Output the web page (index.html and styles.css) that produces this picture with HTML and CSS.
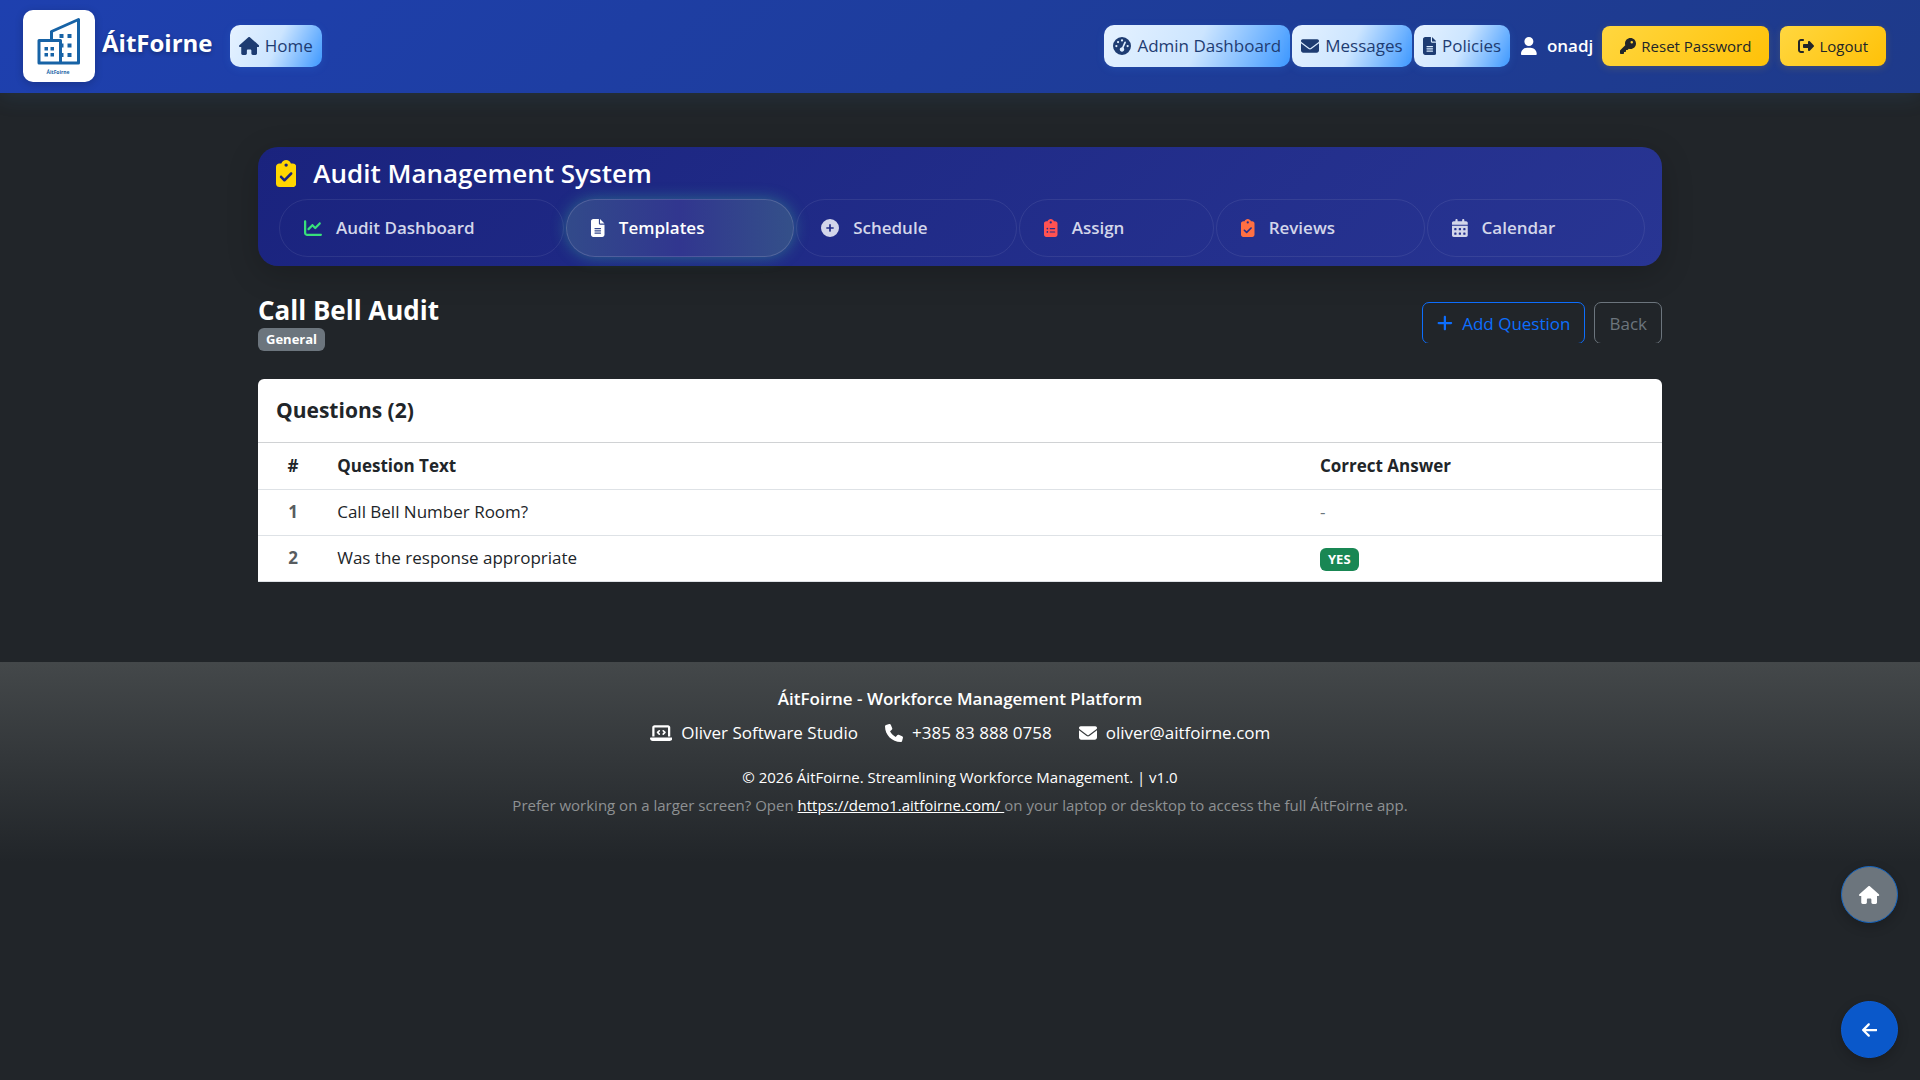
FILE: index.html
```html
<!DOCTYPE html>
<html lang="en">
<head>
  <meta charset="UTF-8">
  <meta name="viewport" content="width=device-width, initial-scale=1.0">
  <title>Call Bell Audit</title>
  <link rel="stylesheet" href="styles.css">
</head>
<body>
  <!-- Shared icon shapes -->
  <svg class="icon-defs" aria-hidden="true">
    <defs>
      <path id="i-home" d="M575.8 255.5c0 18-15 32.1-32 32.1h-32l.7 160.2c0 2.7-.2 5.4-.5 8.1V472c0 22.1-17.9 40-40 40H456c-1.1 0-2.2 0-3.3-.1c-1.4 .1-2.8 .1-4.2 .1H416 392c-22.1 0-40-17.9-40-40V448 384c0-17.7-14.3-32-32-32H256c-17.7 0-32 14.3-32 32v64 24c0 22.1-17.9 40-40 40H160 128.1c-1.5 0-3-.1-4.5-.2c-1.2 .1-2.4 .2-3.6 .2H104c-22.1 0-40-17.9-40-40V360c0-.9 0-1.9 .1-2.8V287.6H32c-18 0-32-14-32-32.1c0-9 3-17 10-24L266.4 8c7-7 15-8 22-8s15 2 21 7L564.8 231.5c8 7 12 15 11 24z"/>
      <path id="i-gauge" d="M0 256a256 256 0 1 1 512 0A256 256 0 1 1 0 256zM288 96a32 32 0 1 0 -64 0 32 32 0 1 0 64 0zM256 416c35.3 0 64-28.7 64-64c0-17.4-6.9-33.1-18.1-44.6L366 161.7c5.3-12.1-.2-26.3-12.3-31.6s-26.3 .2-31.6 12.3L257.9 288c-.6 0-1.3 0-1.9 0c-35.3 0-64 28.7-64 64s28.7 64 64 64zM176 144a32 32 0 1 0 -64 0 32 32 0 1 0 64 0zM96 288a32 32 0 1 0 0-64 32 32 0 1 0 0 64zm352-32a32 32 0 1 0 -64 0 32 32 0 1 0 64 0z"/>
      <path id="i-mail" d="M48 64C21.5 64 0 85.5 0 112c0 15.1 7.1 29.3 19.2 38.4L236.8 313.6c11.4 8.5 27 8.5 38.4 0L492.8 150.4c12.1-9.1 19.2-23.3 19.2-38.4c0-26.5-21.5-48-48-48H48zM0 176V384c0 35.3 28.7 64 64 64H448c35.3 0 64-28.7 64-64V176L294.4 339.2c-22.8 17.1-54 17.1-76.8 0L0 176z"/>
      <path id="i-file" d="M64 0C28.7 0 0 28.7 0 64V448c0 35.3 28.7 64 64 64H320c35.3 0 64-28.7 64-64V160H256c-17.7 0-32-14.3-32-32V0H64zM256 0V128H384L256 0zM112 256H272c8.8 0 16 7.2 16 16s-7.2 16-16 16H112c-8.8 0-16-7.2-16-16s7.2-16 16-16zm0 64H272c8.8 0 16 7.2 16 16s-7.2 16-16 16H112c-8.8 0-16-7.2-16-16s7.2-16 16-16zm0 64H272c8.8 0 16 7.2 16 16s-7.2 16-16 16H112c-8.8 0-16-7.2-16-16s7.2-16 16-16z"/>
      <path id="i-user" d="M224 256A128 128 0 1 0 224 0a128 128 0 1 0 0 256zm-45.7 48C79.8 304 0 383.8 0 482.3C0 498.7 13.3 512 29.7 512H418.3c16.4 0 29.7-13.3 29.7-29.7C448 383.8 368.2 304 269.7 304H178.3z"/>
      <path id="i-key" d="M336 352c97.2 0 176-78.8 176-176S433.2 0 336 0S160 78.8 160 176c0 18.7 2.9 36.8 8.3 53.7L7 391c-4.5 4.5-7 10.6-7 17v80c0 13.3 10.7 24 24 24h80c13.3 0 24-10.7 24-24V448h40c13.3 0 24-10.7 24-24V384h40c6.4 0 12.5-2.5 17-7l33.3-33.3c16.9 5.4 35 8.3 53.7 8.3zM376 96a40 40 0 1 1 0 80 40 40 0 1 1 0-80z"/>
      <path id="i-logout" d="M377.9 105.9L500.7 228.7c7.2 7.2 11.3 17.1 11.3 27.3s-4.1 20.1-11.3 27.3L377.9 406.1c-6.4 6.4-15 9.9-24 9.9c-18.7 0-33.9-15.2-33.9-33.9l0-62.1-128 0c-17.7 0-32-14.3-32-32l0-64c0-17.7 14.3-32 32-32l128 0 0-62.1c0-18.7 15.2-33.9 33.9-33.9c9 0 17.6 3.6 24 9.9zM160 96L96 96c-17.7 0-32 14.3-32 32l0 256c0 17.7 14.3 32 32 32l64 0c17.7 0 32 14.3 32 32s-14.3 32-32 32l-64 0c-53 0-96-43-96-96L0 128C0 75 43 32 96 32l64 0c17.7 0 32 14.3 32 32s-14.3 32-32 32z"/>
      <path id="i-check" d="M192 0c-41.8 0-77.4 26.7-90.5 64H64C28.7 64 0 92.7 0 128V448c0 35.3 28.7 64 64 64H320c35.3 0 64-28.7 64-64V128c0-35.3-28.7-64-64-64H282.5C269.4 26.7 233.8 0 192 0zm0 64a32 32 0 1 1 0 64 32 32 0 1 1 0-64zM305 273L177 401c-9.4 9.4-24.6 9.4-33.9 0L79 337c-9.4-9.4-9.4-24.6 0-33.9s24.6-9.4 33.9 0l47 47L271 239c9.4-9.4 24.6-9.4 33.9 0s9.4 24.6 0 33.9z"/>
      <path id="i-list" d="M192 0c-41.8 0-77.4 26.7-90.5 64H64C28.7 64 0 92.7 0 128V448c0 35.3 28.7 64 64 64H320c35.3 0 64-28.7 64-64V128c0-35.3-28.7-64-64-64H282.5C269.4 26.7 233.8 0 192 0zm0 64a32 32 0 1 1 0 64 32 32 0 1 1 0-64zM72 272a24 24 0 1 1 48 0 24 24 0 1 1 -48 0zm104-16H304c8.8 0 16 7.2 16 16s-7.2 16-16 16H176c-8.8 0-16-7.2-16-16s7.2-16 16-16zM72 368a24 24 0 1 1 48 0 24 24 0 1 1 -48 0zm88 0c0-8.8 7.2-16 16-16H304c8.8 0 16 7.2 16 16s-7.2 16-16 16H176c-8.8 0-16-7.2-16-16z"/>
      <path id="i-chart" d="M64 64c0-17.7-14.3-32-32-32S0 46.3 0 64V400c0 44.2 35.8 80 80 80H480c17.7 0 32-14.3 32-32s-14.3-32-32-32H80c-8.8 0-16-7.2-16-16V64zm406.6 86.6c12.5-12.5 12.5-32.8 0-45.3s-32.8-12.5-45.3 0L320 210.7l-57.4-57.4c-12.5-12.5-32.8-12.5-45.3 0l-112 112c-12.5 12.5-12.5 32.8 0 45.3s32.8 12.5 45.3 0L240 221.3l57.4 57.4c12.5 12.5 32.8 12.5 45.3 0l128-128z"/>
      <path id="i-circle-plus" d="M256 512A256 256 0 1 0 256 0a256 256 0 1 0 0 512zM232 344V280H168c-13.3 0-24-10.7-24-24s10.7-24 24-24h64V168c0-13.3 10.7-24 24-24s24 10.7 24 24v64h64c13.3 0 24 10.7 24 24s-10.7 24-24 24H280v64c0 13.3-10.7 24-24 24s-24-10.7-24-24z"/>
      <path id="i-calendar" d="M128 0c17.7 0 32 14.3 32 32V64H288V32c0-17.7 14.3-32 32-32s32 14.3 32 32V64h48c26.5 0 48 21.5 48 48v48H0V112C0 85.5 21.5 64 48 64H96V32c0-17.7 14.3-32 32-32zM0 192H448V464c0 26.5-21.5 48-48 48H48c-26.5 0-48-21.5-48-48V192zm64 80v32c0 8.8 7.2 16 16 16h32c8.8 0 16-7.2 16-16V272c0-8.8-7.2-16-16-16H80c-8.8 0-16 7.2-16 16zm128 0v32c0 8.8 7.2 16 16 16h32c8.8 0 16-7.2 16-16V272c0-8.8-7.2-16-16-16H208c-8.8 0-16 7.2-16 16zm144-16c-8.8 0-16 7.2-16 16v32c0 8.8 7.2 16 16 16h32c8.8 0 16-7.2 16-16V272c0-8.8-7.2-16-16-16H336zM64 400v32c0 8.8 7.2 16 16 16h32c8.8 0 16-7.2 16-16V400c0-8.8-7.2-16-16-16H80c-8.8 0-16 7.2-16 16zm144-16c-8.8 0-16 7.2-16 16v32c0 8.8 7.2 16 16 16h32c8.8 0 16-7.2 16-16V400c0-8.8-7.2-16-16-16H208zm112 16v32c0 8.8 7.2 16 16 16h32c8.8 0 16-7.2 16-16V400c0-8.8-7.2-16-16-16H336c-8.8 0-16 7.2-16 16z"/>
      <path id="i-plus" d="M256 80c0-17.7-14.3-32-32-32s-32 14.3-32 32V224H48c-17.7 0-32 14.3-32 32s14.3 32 32 32H192V432c0 17.7 14.3 32 32 32s32-14.3 32-32V288H400c17.7 0 32-14.3 32-32s-14.3-32-32-32H256V80z"/>
      <path id="i-laptop" d="M64 96c0-35.3 28.7-64 64-64H512c35.3 0 64 28.7 64 64V352H512V96H128V352H64V96zM0 403.2C0 392.6 8.6 384 19.2 384H620.8c10.6 0 19.2 8.6 19.2 19.2c0 42.4-34.4 76.8-76.8 76.8H76.8C34.4 480 0 445.6 0 403.2zM281 209l-31 31 31 31c9.4 9.4 9.4 24.6 0 33.9s-24.6 9.4-33.9 0l-48-48c-9.4-9.4-9.4-24.6 0-33.9l48-48c9.4-9.4 24.6-9.4 33.9 0s9.4 24.6 0 33.9zM393 175l48 48c9.4 9.4 9.4 24.6 0 33.9l-48 48c-9.4 9.4-24.6 9.4-33.9 0s-9.4-24.6 0-33.9l31-31-31-31c-9.4-9.4-9.4-24.6 0-33.9s24.6-9.4 33.9 0z"/>
      <path id="i-phone" d="M164.9 24.6c-7.7-18.6-28-28.5-47.4-23.2l-88 24C12.1 30.2 0 46 0 64C0 311.4 200.6 512 448 512c18 0 33.8-12.1 38.6-29.5l24-88c5.3-19.4-4.6-39.7-23.2-47.4l-96-40c-16.3-6.8-35.2-2.1-46.3 11.6L304.7 368C234.3 334.7 177.3 277.7 144 207.3L193.3 167c13.7-11.2 18.4-30 11.6-46.3l-40-96z"/>
      <path id="i-left" d="M9.4 233.4c-12.5 12.5-12.5 32.8 0 45.3l160 160c12.5 12.5 32.8 12.5 45.3 0s12.5-32.8 0-45.3L109.2 288 416 288c17.7 0 32-14.3 32-32s-14.3-32-32-32l-306.7 0L214.6 118.6c12.5-12.5 12.5-32.8 0-45.3s-32.8-12.5-45.3 0l-160 160z"/>
    </defs>
  </svg>

  <header class="navbar">
    <a class="brand" href="#">
      <svg class="logo" viewBox="0 0 72 72" role="img" aria-label="ÁitFoirne logo">
        <path class="logo-line" d="M28.5 29.5V21.5L55.5 9.5V53H16V30.5H37.5V53"/>
        <path class="logo-fill" d="M36.5 24h4v4h-4zM44.5 24h4v4h-4zM38 33.5h2.5v4H38zM44.5 33.5h4v4h-4zM38 43h2.5v4H38zM44.5 43h4v4h-4zM21.5 37H25v3.5h-3.5zM27.5 37H31v3.5h-3.5zM21.5 43H25v3.5h-3.5zM27.5 43H31v3.5h-3.5z"/>
        <text class="logo-text" x="35" y="64">ÁitFoirne</text>
      </svg>
      <span class="brand-name">ÁitFoirne</span>
    </a>
    <a class="nav-btn nav-home" href="#"><svg class="icon" viewBox="0 0 576 512"><use href="#i-home"/></svg>Home</a>

    <nav class="nav-right">
      <a class="nav-btn" href="#"><svg class="icon" viewBox="0 0 512 512"><use href="#i-gauge"/></svg>Admin Dashboard</a>
      <a class="nav-btn" href="#"><svg class="icon" viewBox="0 0 512 512"><use href="#i-mail"/></svg>Messages</a>
      <a class="nav-btn" href="#"><svg class="icon" viewBox="0 0 384 512"><use href="#i-file"/></svg>Policies</a>
    </nav>
    <span class="user"><svg class="icon" viewBox="0 0 448 512"><use href="#i-user"/></svg>onadj</span>
    <div class="account">
      <button class="btn-gold" type="button"><svg class="icon" viewBox="0 0 512 512"><use href="#i-key"/></svg>Reset Password</button>
      <button class="btn-gold" type="button"><svg class="icon" viewBox="0 0 512 512"><use href="#i-logout"/></svg>Logout</button>
    </div>
  </header>

  <main class="container">
    <section class="audit-nav">
      <h1><svg class="icon gold" viewBox="0 0 384 512"><use href="#i-check"/></svg>Audit Management System</h1>
      <nav class="tabs">
        <a class="tab" href="#"><svg class="icon green" viewBox="0 0 512 512"><use href="#i-chart"/></svg>Audit Dashboard</a>
        <a class="tab active" href="#"><svg class="icon" viewBox="0 0 384 512"><use href="#i-file"/></svg>Templates</a>
        <a class="tab" href="#"><svg class="icon" viewBox="0 0 512 512"><use href="#i-circle-plus"/></svg>Schedule</a>
        <a class="tab" href="#"><svg class="icon red" viewBox="0 0 384 512"><use href="#i-list"/></svg>Assign</a>
        <a class="tab" href="#"><svg class="icon orange" viewBox="0 0 384 512"><use href="#i-check"/></svg>Reviews</a>
        <a class="tab" href="#"><svg class="icon" viewBox="0 0 448 512"><use href="#i-calendar"/></svg>Calendar</a>
      </nav>
    </section>

    <div class="page-head">
      <div>
        <h2>Call Bell Audit</h2>
        <span class="badge">General</span>
      </div>
      <div class="actions">
        <button class="btn-outline primary" type="button"><svg class="icon" viewBox="0 0 448 512"><use href="#i-plus"/></svg>Add Question</button>
        <button class="btn-outline" type="button">Back</button>
      </div>
    </div>

    <section class="card">
      <h3>Questions (2)</h3>
      <table>
        <thead>
          <tr><th class="num">#</th><th class="question">Question Text</th><th>Correct Answer</th></tr>
        </thead>
        <tbody>
          <tr><td class="num">1</td><td>Call Bell Number Room?</td><td class="muted">-</td></tr>
          <tr><td class="num">2</td><td>Was the response appropriate</td><td><span class="badge yes">YES</span></td></tr>
        </tbody>
      </table>
    </section>
  </main>

  <footer class="footer">
    <p class="footer-title">ÁitFoirne - Workforce Management Platform</p>
    <div class="contacts">
      <span><svg class="icon" viewBox="0 0 640 512"><use href="#i-laptop"/></svg>Oliver Software Studio</span>
      <span><svg class="icon" viewBox="0 0 512 512"><use href="#i-phone"/></svg>+385 83 888 0758</span>
      <span><svg class="icon" viewBox="0 0 512 512"><use href="#i-mail"/></svg>oliver@aitfoirne.com</span>
    </div>
    <p class="copyright">© 2026 ÁitFoirne. Streamlining Workforce Management. | v1.0</p>
    <p class="hint">Prefer working on a larger screen? Open <a href="#">https://demo1.aitfoirne.com/ </a>on your laptop or desktop to access the full ÁitFoirne app.</p>
  </footer>

  <div class="floating">
    <button class="round" type="button" aria-label="Home"><svg class="icon" viewBox="0 0 576 512"><use href="#i-home"/></svg></button>
    <button class="round blue" type="button" aria-label="Back"><svg class="icon" viewBox="0 0 448 512"><use href="#i-left"/></svg></button>
  </div>
</body>
</html>
```

FILE: styles.css
```css
* {
  box-sizing: border-box;
}

body {
  margin: 0;
  min-height: 100vh;
  font-family: "Open Sans", "Noto Sans", sans-serif;
  font-size: 17px;
  line-height: 24px;
  background-color: #212529;
  color: #fff;
}

h1, h2, h3, p {
  margin: 0;
}

a {
  color: inherit;
  text-decoration: none;
}

button {
  font-family: inherit;
  cursor: pointer;
}

.icon-defs {
  display: none;
}

.icon {
  height: 18px;
  flex: none;
  fill: currentColor;
}

/* Top bar */
.navbar {
  display: flex;
  align-items: center;
  height: 93px;
  padding: 0 34px 2px 23px;
  background: linear-gradient(135deg, #1e40af, #1e3a8a);
  box-shadow: 0 4px 20px rgba(59, 130, 180, 0.15);
}

.brand {
  display: flex;
  align-items: center;
  gap: 7px;
}

.logo {
  width: 72px;
  height: 72px;
  background: #fff;
  border-radius: 10px;
  box-shadow: 0 2px 8px rgba(0, 0, 0, 0.2);
}

.logo-line {
  fill: none;
  stroke: #1763a6;
  stroke-width: 3;
  stroke-linejoin: round;
}

.logo-fill {
  fill: #1763a6;
}

.logo-text {
  fill: #1763a6;
  font-size: 5px;
  font-weight: 700;
  text-anchor: middle;
}

.brand-name {
  font-size: 24px;
  font-weight: 700;
  padding-bottom: 5px;
  text-shadow: 0 2px 4px rgba(0, 0, 0, 0.3);
}

.nav-btn {
  display: flex;
  align-items: center;
  gap: 6px;
  height: 42px;
  padding: 0 9px;
  border-radius: 10px;
  font-weight: 500;
  color: #1e3c72;
  background: linear-gradient(115deg, #e6f2ff 0%, #cce5ff 50%, #3d98ff 100%);
  box-shadow: 0 2px 8px rgba(61, 152, 255, 0.15);
}

.nav-home {
  margin-left: 17px;
}

.nav-right {
  display: flex;
  gap: 2px;
  margin-left: auto;
}

.user {
  display: flex;
  align-items: center;
  gap: 10px;
  padding: 0 9px 0 11px;
  font-weight: 600;
}

.account {
  display: flex;
  gap: 11px;
}

.btn-gold {
  display: flex;
  align-items: center;
  gap: 5px;
  height: 40px;
  padding: 0 18px;
  border: none;
  border-radius: 8px;
  font-size: 15px;
  font-weight: 500;
  color: #212529;
  background: linear-gradient(135deg, #ffd740, #ffc107);
  box-shadow: 0 2px 8px rgba(255, 193, 7, 0.15);
}

.btn-gold .icon {
  height: 16px;
}

/* Page content */
.container {
  max-width: 1428px;
  margin: 0 auto;
  padding: 54px 12px 80px;
}

.audit-nav {
  padding: 8px 16px 9px;
  border-radius: 20px;
  background: linear-gradient(135deg, #1a237e, #283593);
  box-shadow: 0 8px 32px rgba(0, 0, 0, 0.2);
}

.audit-nav h1 {
  display: flex;
  align-items: center;
  gap: 17px;
  padding-left: 2px;
  font-size: 26px;
  font-weight: 600;
  line-height: 36px;
}

.audit-nav h1 .icon {
  height: 27px;
}

.gold { color: #ffd600; }
.green { color: #38e07b; }
.red { color: #ff5252; }
.orange { color: #ff7043; }

.tabs {
  display: flex;
  gap: 2px;
  margin-top: 8px;
  padding: 0 1px 0 5px;
}

.tab {
  display: flex;
  flex: 1 1 auto;
  align-items: center;
  gap: 14px;
  height: 58px;
  padding: 0 24px;
  border: 1px solid rgba(255, 255, 255, 0.08);
  border-radius: 29px;
  font-weight: 600;
  color: #d3d6ea;
}

.tab.active {
  color: #fff;
  border-color: rgba(255, 255, 255, 0.15);
  background: linear-gradient(90deg, #324a8a, #31368f 50%, #345089);
  box-shadow: 0 0 15px rgba(64, 200, 150, 0.4);
}

.page-head {
  display: flex;
  justify-content: space-between;
  align-items: flex-start;
  margin-top: 28px;
}

.page-head h2 {
  font-size: 26px;
  font-weight: 700;
  line-height: 32px;
}

.badge {
  display: inline-block;
  padding: 0 8px;
  border-radius: 6px;
  font-size: 13px;
  font-weight: 700;
  line-height: 23px;
  background: #6c757d;
  color: #fff;
}

.yes {
  background: #198754;
}

/* The buttons run a little past the bottom of this row */
.actions {
  display: flex;
  gap: 9px;
  height: 41px;
  margin-top: 8px;
  overflow: hidden;
}

.btn-outline {
  display: flex;
  align-items: center;
  gap: 9px;
  height: 42px;
  padding: 0 14px;
  border: 1px solid #6c757d;
  border-radius: 7px;
  font-size: 17px;
  background: transparent;
  color: #6c757d;
}

.primary {
  border-color: #0d6efd;
  color: #0d6efd;
}

.card {
  margin-top: 28px;
  border-radius: 6px 6px 0 0;
  background: #fff;
  color: #212529;
}

.card h3 {
  padding: 0 18px;
  border-bottom: 1px solid #d0d2d4;
  font-size: 21px;
  font-weight: 700;
  line-height: 63px;
}

table {
  width: 100%;
  border-collapse: collapse;
  table-layout: fixed;
}

th, td {
  height: 46px;
  padding: 0 9px;
  border-bottom: 1px solid #dee2e6;
  text-align: left;
}

th {
  font-weight: 700;
}

.num {
  width: 5%;
  text-align: center;
}

.question {
  width: 70%;
}

td.num {
  font-weight: 700;
  color: #585c60;
}

.muted {
  color: #6c757d;
}

/* Footer */
.footer {
  height: 200px;
  padding-top: 25px;
  text-align: center;
  background: linear-gradient(180deg, #44484a, #212529);
}

.footer-title {
  font-weight: 600;
}

.contacts {
  display: flex;
  justify-content: center;
  gap: 27px;
  margin-top: 10px;
}

.contacts span {
  display: flex;
  align-items: center;
  gap: 9px;
}

.copyright,
.hint {
  font-size: 15px;
}

.copyright {
  margin-top: 20px;
}

.hint {
  margin-top: 4px;
  color: #8e9193;
}

.hint a {
  color: #fff;
  text-decoration: underline;
}

/* Floating buttons */
.floating {
  position: fixed;
  right: 22px;
  bottom: 22px;
  display: flex;
  flex-direction: column;
  gap: 78px;
}

.round {
  display: flex;
  align-items: center;
  justify-content: center;
  width: 57px;
  height: 57px;
  padding: 0;
  border: 1px solid #1565c0;
  border-radius: 50%;
  color: #fff;
  background: #6c757d;
  box-shadow: 0 4px 12px rgba(0, 0, 0, 0.2);
}

.blue {
  border-color: #0b5ed7;
  background: #0a58ca;
}
```
